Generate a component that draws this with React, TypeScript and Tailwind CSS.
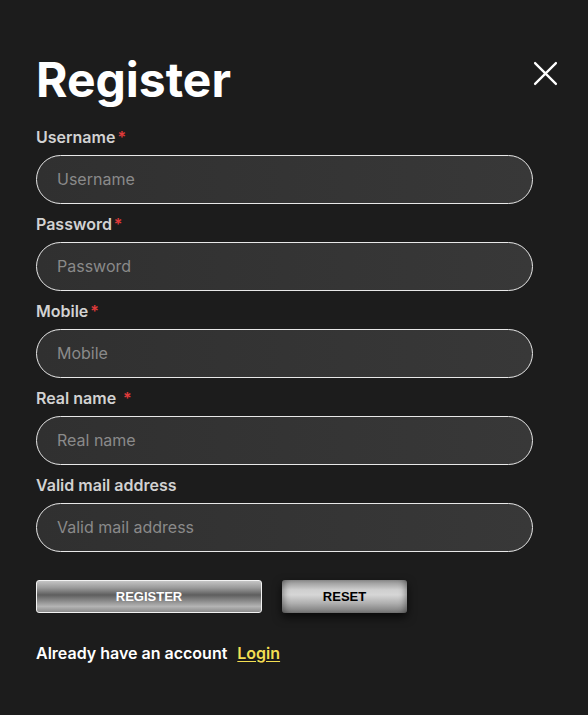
import React from "react";

type Field = { label: string; required: boolean; spaced?: boolean; type?: string };

const fields: Field[] = [
  { label: "Username", required: true },
  { label: "Password", required: true, type: "password" },
  { label: "Mobile", required: true },
  { label: "Real name", required: true, spaced: true },
  { label: "Valid mail address", required: false },
];

export default function App() {
  return (
    <div
      className="min-h-[715px] w-full bg-[#1c1c1c] px-[36px] pt-[56px]"
      style={{ fontFamily: "Inter, 'Noto Sans', sans-serif" }}
    >
      {/* Header */}
      <div className="flex items-start justify-between">
        <h1 className="text-[48px] font-bold leading-[48px] text-white">Register</h1>
        <button className="mr-[-10px] mt-[1px] p-1 text-white" aria-label="Close">
          <svg width="25" height="25" viewBox="0 0 24 24" fill="none" stroke="currentColor" strokeWidth="2.2" strokeLinecap="round">
            <path d="M2 2L22 22M22 2L2 22" />
          </svg>
        </button>
      </div>

      {/* Formulario */}
      <form className="mt-[21px] w-[497px]" onSubmit={(e) => e.preventDefault()}>
        {fields.map((f, i) => (
          <div key={f.label} className={i > 0 ? "mt-2" : ""}>
            <label className="mb-[6px] block text-[16px] font-semibold leading-6 text-[#d2d2d2]">
              {f.label}
              {f.required && (
                <span className={f.spaced ? "ml-[7px] text-[#e03a3a]" : "ml-[2px] text-[#e03a3a]"}>*</span>
              )}
            </label>
            <input
              type={f.type ?? "text"}
              placeholder={f.label}
              className="h-[49px] w-full rounded-full border border-[#e8e8e8] bg-gradient-to-r from-[#303030] to-[#383838] px-[20px] pb-px text-[16px] text-white outline-none placeholder:text-[#8a8a8a]"
            />
          </div>
        ))}

        <div className="mt-[28px] flex gap-[20px]" style={{ fontFamily: "'Liberation Sans', Arial, sans-serif" }}>
          <button
            type="submit"
            className="h-[33px] w-[226px] rounded-[3px] border border-[#f2f2f2] bg-[linear-gradient(to_bottom,#c4c4c4_0%,#9a9a9a_22%,#5e5e5e_45%,#8c8c8c_65%,#b4b4b4_82%,#8a8a8a_100%)] text-[13px] font-bold text-white"
          >
            REGISTER
          </button>
          <button
            type="reset"
            className="h-[33px] w-[125px] rounded-[3px] bg-[linear-gradient(to_bottom,#8e8e8e_0%,#cfcfcf_30%,#d6d6d6_45%,#b0b0b0_70%,#767676_100%)] text-[13px] font-bold text-black shadow-[0_4px_10px_rgba(0,0,0,0.7),inset_6px_0_6px_-4px_rgba(0,0,0,0.35),inset_-6px_0_6px_-4px_rgba(0,0,0,0.35)]"
          >
            RESET
          </button>
        </div>
      </form>

      <p className="mt-[28px] text-[16px] font-semibold leading-6 text-white">
        Already have an account
        <a href="#login" className="ml-[10px] text-[#f3df52] underline underline-offset-2">
          Login
        </a>
      </p>
    </div>
  );
}
